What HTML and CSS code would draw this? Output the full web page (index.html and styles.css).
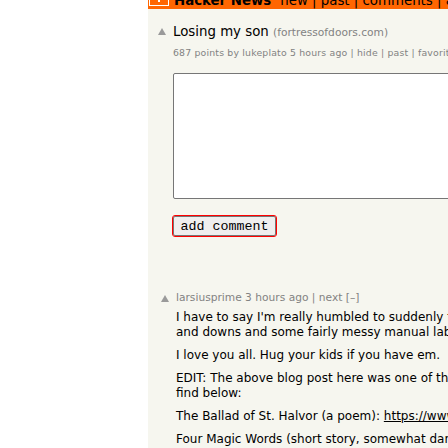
FILE: index.html
```html
<!DOCTYPE html>
<html lang="en">
<head>
<meta charset="utf-8">
<title>Losing my son | Hacker News</title>
<link rel="stylesheet" href="styles.css">
</head>
<body>
<div class="page">
  <header class="topbar">
    <span class="logo">
      <svg width="18" height="18" viewBox="0 0 18 18"><path d="M5 4 L9 10 L13 4 M9 10 V15" fill="none" stroke="#fff" stroke-width="2"/></svg>
    </span>
    <span class="toptext"><b class="hnname">Hacker News</b><span class="pagetop">new | past | comments | ask | show | jobs | submit</span></span>
  </header>

  <div class="story">
    <div class="vote">
      <svg width="10" height="10" viewBox="0 0 10 10"><polygon points="5,1 9,8 1,8" fill="#9a9a9a"/></svg>
    </div>
    <div class="storybody">
      <div class="titleline"><a class="titlelink">Losing my son</a> <span class="site">(fortressofdoors.com)</span></div>
      <div class="subtext">687 points by lukeplato 5 hours ago | hide | past | favorite | 103 comments</div>
      <form class="reply">
        <textarea class="replybox"></textarea>
        <button type="button" class="addbtn">add comment</button>
      </form>
    </div>
  </div>

  <div class="comment">
    <div class="vote">
      <svg width="10" height="10" viewBox="0 0 10 10"><polygon points="5,1 9,8 1,8" fill="#9a9a9a"/></svg>
    </div>
    <div class="combody">
      <div class="comhead">larsiusprime 3 hours ago | next [–]</div>
      <div class="commtext">
        <p>I have to say I'm really humbled to suddenly find myself on the front page after a year of ups<br>and downs and some fairly messy manual labor of grief and writing.</p>
        <p>I love you all. Hug your kids if you have em.</p>
        <p>EDIT: The above blog post here was one of three things I wrote about it, the other two you can<br>find below:</p>
        <p>The Ballad of St. Halvor (a poem): <a class="link">https://www.fortressofdoors.com/the-ballad-of-st-halvor/</a></p>
        <p>Four Magic Words (short story, somewhat dark): https://www.fortressofdoors.com/four-magic-words/</p>
      </div>
    </div>
  </div>
</div>
</body>
</html>
```

FILE: styles.css
```css
html, body {
  margin: 0;
  padding: 0;
  overflow: hidden;
  background: #ffffff;
}

body {
  font-family: "DejaVu Sans", Verdana, sans-serif;
  width: 448px;
  height: 448px;
}

.page {
  margin-left: 148px;
  margin-top: -16px;
  width: 760px;
  min-height: 480px;
  background: #f6f6ef;
}

.topbar {
  display: flex;
  align-items: flex-end;
  background: #ff6600;
  padding: 2px 2px 3px 1px;
}

.logo {
  display: block;
  width: 18px;
  height: 18px;
  border: 1px solid #ffffff;
}

.logo svg {
  display: block;
}

.toptext {
  margin-left: 5px;
  font-size: 13.33px;
  line-height: 11px;
  color: #000;
  white-space: nowrap;
}

.hnname {
  font-weight: bold;
  margin-right: 9px;
}

.story {
  display: flex;
  align-items: flex-start;
  margin-top: 15px;
}

.vote {
  width: 10px;
  margin-top: 3px;
  flex: none;
}

.vote svg {
  display: block;
}

.story .vote {
  margin-left: 9px;
  margin-right: 6px;
}

.storybody {
  flex: 1;
}

.titleline {
  font-size: 13.33px;
  line-height: 16px;
  white-space: nowrap;
}

.titlelink {
  color: #000;
}

.site {
  font-size: 10.67px;
  color: #828282;
}

.subtext {
  margin-top: 6px;
  font-size: 9.33px;
  letter-spacing: 0.18px;
  line-height: 12px;
  color: #828282;
  white-space: nowrap;
}

.reply {
  display: flex;
  flex-direction: column;
  align-items: flex-start;
  margin: 14px 0 0 0;
}

.replybox {
  display: block;
  box-sizing: border-box;
  width: 600px;
  height: 126px;
  margin: 0;
  border: 1px solid #767676;
  border-radius: 2px;
  background: #fff;
  resize: none;
}

.addbtn {
  box-sizing: border-box;
  width: 103px;
  height: 20px;
  margin-top: 17px;
  padding: 0;
  font-family: "Liberation Mono", "Courier New", monospace;
  font-size: 13.33px;
  color: #000;
  background: #efefef;
  border: 1px solid #767676;
  border-radius: 2px;
  outline: 1px solid #ff0000;
  outline-offset: 0;
}

.comment {
  display: flex;
  align-items: flex-start;
  margin-top: 55px;
}

.comment .vote {
  margin-left: 12px;
  margin-right: 6px;
}

.comhead {
  font-size: 10.67px;
  line-height: 13px;
  color: #828282;
  white-space: nowrap;
}

.commtext {
  margin-top: 6px;
  font-size: 12px;
  line-height: 15.2px;
  color: #000;
  white-space: nowrap;
}

.commtext p {
  margin: 0 0 7.8px 0;
}

.link {
  color: #000;
  text-decoration: underline;
}
```
